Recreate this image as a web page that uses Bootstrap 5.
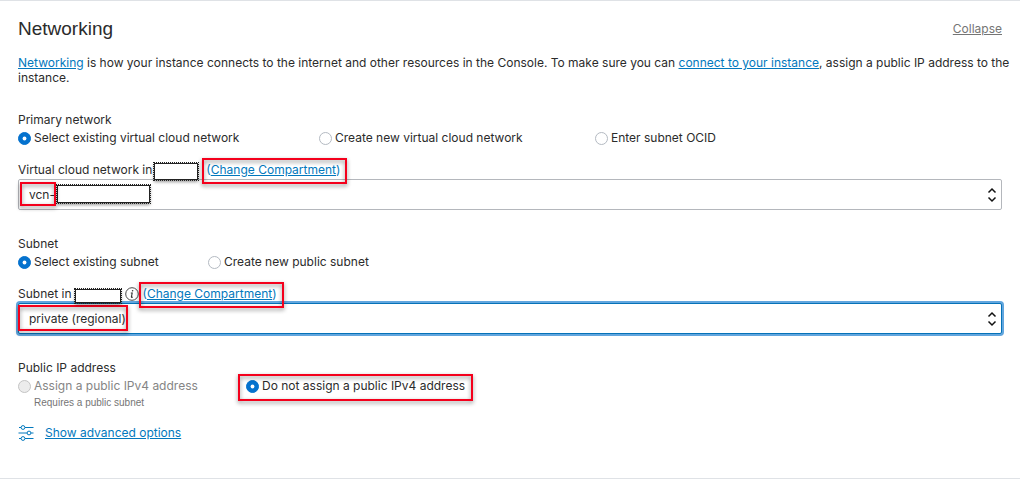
<!DOCTYPE html>
<html lang="en">
<head>
<meta charset="utf-8">
<meta name="viewport" content="width=device-width, initial-scale=1">
<title>Networking</title>
<link href="https://cdn.jsdelivr.net/npm/bootstrap@5.3.0/dist/css/bootstrap.min.css" rel="stylesheet">
<style>
  body { font-family: Inter, "Liberation Sans", Arial, sans-serif; font-size: 12px; line-height: 18px; color: #2b2b2b; background: #fff; }
  a, .paren { color: #0278bd; }
  .panel { border: solid #dfe2e6; border-width: 1px 0; padding: 18px 18px 36px; }
  .panel-title { font-family: "Liberation Sans", Arial, sans-serif; font-size: 19px; line-height: 20px; font-weight: 400; margin: 0; }
  .collapse-link { color: #757575; }
  .intro { line-height: 15px; margin: 16px -12px 26px 0; }
  .group { margin-bottom: 25px; }
  .group-title { font-size: 12px; line-height: 18px; margin: 0; float: none; }
  .choices { display: grid; justify-content: start; }
  .cols-network { grid-template-columns: 301px 276px auto; }
  .cols-subnet { grid-template-columns: 190px auto; }
  .cols-address { grid-template-columns: 228px auto; }
  .choice { display: flex; align-items: center; gap: 3px; position: relative; height: 18px; white-space: nowrap; }
  .choice .form-check-input { width: 13px; height: 13px; margin: 0; border: 1px solid #b4bac2; background-size: 100%; }
  .choice .form-check-input:checked { background-color: #0572ce; border-color: #0572ce;
    background-image: url("data:image/svg+xml,%3csvg xmlns='http://www.w3.org/2000/svg' viewBox='0 0 11 11'%3e%3ccircle cx='5.5' cy='5.5' r='1.9' fill='%23fff'/%3e%3c/svg%3e"); }
  .choice .form-check-input:disabled { background-color: #ececec; border-color: #c4c4c4; opacity: 1; }
  .choice .form-check-input:disabled ~ label { opacity: 1; color: #858585; }
  .hint { font-family: "Liberation Sans", Arial, sans-serif; font-size: 10px; line-height: 16px; color: #757575; padding-left: 16px; }
  .field-label { display: flex; align-items: center; height: 18px; margin-top: 14px; position: relative; z-index: 2; }
  .picker { position: relative; }
  .picker .form-select { height: 31px; padding: 0 30px 0 10px; font-size: 12px; line-height: 18px; color: #2b2b2b; border: 1px solid #b4b7bc; border-radius: 2px;
    background-image: url("data:image/svg+xml,%3csvg xmlns='http://www.w3.org/2000/svg' viewBox='0 0 10 16'%3e%3cpath d='M1.5 5.5 5 2l3.500 3.500M1.500 10.500 5 14l3.500-3.500' fill='none' stroke='%23111' stroke-width='1.5'/%3e%3c/svg%3e");
    background-size: 10px 16px; background-position: right 4px center; }
  .picker .picker-active { border-color: #0572b8; box-shadow: 0 0 0 2px #62a6de; }
  .redacted { background: #fff; border: 1px solid #222; outline: 1px dotted #222; box-shadow: 0 2px 3px #0006; }
  .redacted-label { width: 44px; height: 17px; margin: 3px 8px 0 2px; }
  .redacted-subnet { width: 46px; height: 14px; margin: 3px 4px 0 3px; }
  .redacted-value { position: absolute; left: 39px; top: 6px; width: 93px; height: 18px; }
  .callout { position: absolute; border: 2px solid #f4001c; filter: drop-shadow(0 2px 2px #0007); pointer-events: none; }
  .target { position: relative; }
  .callout-link { inset: -3px -7px -5px -4px; }
  .callout-vcn { left: 2px; top: 3px; width: 36px; height: 24px; }
  .callout-private { left: 0; top: 2px; width: 110px; height: 26px; }
  .callout-choice { inset: -3px -8px -6px -8px; }
  .advanced { display: flex; align-items: center; gap: 11px; margin-top: 13px; }
</style>
</head>
<body>
<main class="panel">
  <header class="d-flex justify-content-between align-items-center">
    <h1 class="panel-title">Networking</h1>
    <a class="collapse-link" href="#">Collapse</a>
  </header>
  <p class="intro"><a href="#">Networking</a> is how your instance connects to the internet and other resources in the Console. To make sure you can <a href="#">connect to your instance</a>, assign a public IP address to the instance.</p>

  <fieldset class="group">
    <legend class="group-title">Primary network</legend>
    <div class="choices cols-network">
      <div class="choice"><input class="form-check-input" type="radio" name="network" id="net-existing" checked><label for="net-existing">Select existing virtual cloud network</label></div>
      <div class="choice"><input class="form-check-input" type="radio" name="network" id="net-new"><label for="net-new">Create new virtual cloud network</label></div>
      <div class="choice"><input class="form-check-input" type="radio" name="network" id="net-ocid"><label for="net-ocid">Enter subnet OCID</label></div>
    </div>
    <div class="field-label">
      <label for="vcn">Virtual cloud network in</label>
      <span class="redacted redacted-label"></span>
      <span class="target"><span class="paren">(</span><a href="#">Change Compartment</a><span class="paren">)</span><span class="callout callout-link"></span></span>
    </div>
    <div class="picker">
      <select class="form-select" id="vcn"><option>vcn-</option></select>
      <span class="redacted redacted-value"></span>
      <span class="callout callout-vcn"></span>
    </div>
  </fieldset>

  <fieldset class="group">
    <legend class="group-title">Subnet</legend>
    <div class="choices cols-subnet">
      <div class="choice"><input class="form-check-input" type="radio" name="subnet" id="sub-existing" checked><label for="sub-existing">Select existing subnet</label></div>
      <div class="choice"><input class="form-check-input" type="radio" name="subnet" id="sub-new"><label for="sub-new">Create new public subnet</label></div>
    </div>
    <div class="field-label">
      <label for="subnet">Subnet in</label>
      <span class="redacted redacted-subnet"></span>
      <svg class="me-1" width="14" height="14" viewBox="0 0 14 14" fill="none" stroke="#333" aria-hidden="true"><circle cx="7" cy="7" r="6.300" stroke-width=".9"/><path d="M5.800 6h1.400L6.400 9.900q-.1.600.7.400l.7-.4" stroke-width="1.100"/><circle cx="7.600" cy="3.800" r=".8" fill="#333" stroke="none"/></svg>
      <span class="target"><span class="paren">(</span><a href="#">Change Compartment</a><span class="paren">)</span><span class="callout callout-link"></span></span>
    </div>
    <div class="picker">
      <select class="form-select picker-active" id="subnet"><option>private (regional)</option></select>
      <span class="callout callout-private"></span>
    </div>
  </fieldset>

  <fieldset>
    <legend class="group-title">Public IP address</legend>
    <div class="choices cols-address">
      <div>
        <div class="choice"><input class="form-check-input" type="radio" name="address" id="ip-assign" aria-describedby="ip-hint" disabled><label for="ip-assign">Assign a public IPv4 address</label></div>
        <div class="hint" id="ip-hint">Requires a public subnet</div>
      </div>
      <div class="choice"><input class="form-check-input" type="radio" name="address" id="ip-none" checked><label for="ip-none">Do not assign a public IPv4 address</label><span class="callout callout-choice"></span></div>
    </div>
  </fieldset>

  <div class="advanced">
    <svg width="16" height="16" viewBox="0 0 16 16" fill="none" stroke="#0278bd" aria-hidden="true"><path d="M1 2.500h2M7 2.500h8.500M.5 8H9M13 8h2.500M1 13.500h2M7 13.500h8.500"/><circle cx="5" cy="2.500" r="1.900"/><circle cx="11" cy="8" r="1.900"/><circle cx="5" cy="13.500" r="1.900"/></svg>
    <a href="#">Show advanced options</a>
  </div>
</main>
<script src="https://cdn.jsdelivr.net/npm/bootstrap@5.3.0/dist/js/bootstrap.bundle.min.js"></script>
</body>
</html>
